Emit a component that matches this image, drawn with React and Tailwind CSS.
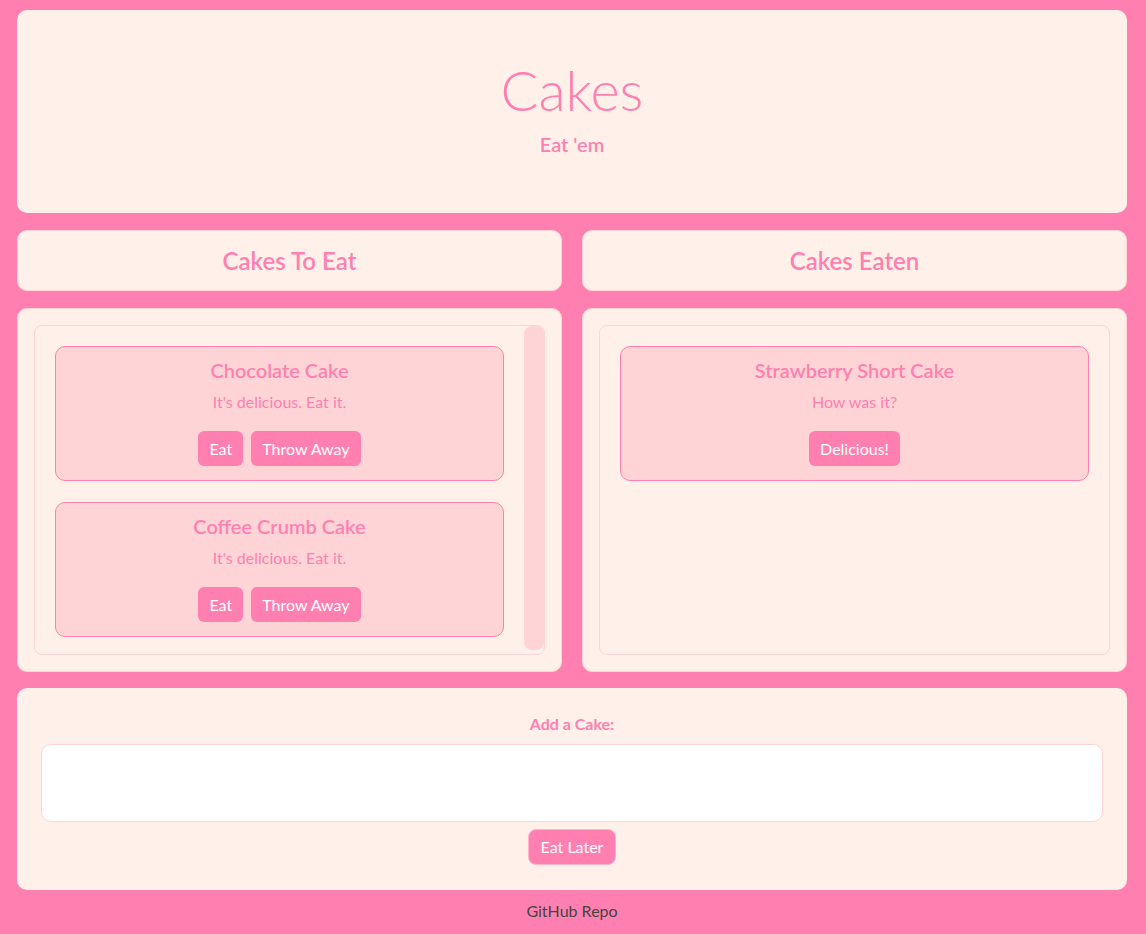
export default function App() {
  const font = { fontFamily: '"Segoe UI", Lato, "Noto Sans", sans-serif' };
  const Btn = ({ children }) => (
    <button className="h-[35px] px-[11px] rounded-[6px] bg-[#ff80b0] text-white text-[16px] leading-none">
      {children}
    </button>
  );
  const Card = ({ title, sub, buttons }) => (
    <div className="h-[135px] rounded-[10px] border border-[#ff80b0] bg-[#ffd4d6] flex flex-col items-center pt-[10px]">
      <div className="text-[20px] font-semibold text-[#ff80b0] leading-[26px]">{title}</div>
      <div className="text-[16px] text-[#ff80b0] mt-[8px] leading-[22px]">{sub}</div>
      <div className="flex gap-[8px] mt-[18px]">
        {buttons.map((b) => (
          <Btn key={b}>{b}</Btn>
        ))}
      </div>
    </div>
  );
  return (
    <div className="min-h-[934px] bg-[#ff80b0] pt-[10px]" style={font}>
      <div className="ml-[17px] w-[1110px] flex flex-col">
        <div className="h-[203px] rounded-[10px] bg-[#fff0e9] flex flex-col items-center justify-center">
          <div className="text-[56px] font-light text-[#ff80b0] leading-[64px] mt-[-8px]">Cakes</div>
          <div className="text-[20px] font-semibold text-[#ff80b0] leading-[26px] mt-[9px]">Eat 'em</div>
        </div>
        <div className="grid grid-cols-2 gap-[20px] mt-[17px]">
          <div className="h-[61px] rounded-[10px] bg-[#fff0e9] border border-[#ffd4d6] flex items-center justify-center">
            <div className="text-[24px] font-semibold text-[#ff80b0]">Cakes To Eat</div>
          </div>
          <div className="h-[61px] rounded-[10px] bg-[#fff0e9] border border-[#ffd4d6] flex items-center justify-center">
            <div className="text-[24px] font-semibold text-[#ff80b0]">Cakes Eaten</div>
          </div>
        </div>
        <div className="grid grid-cols-2 gap-[20px] mt-[17px]">
          <div className="h-[364px] rounded-[10px] bg-[#fff0e9] border border-[#ffd4d6] p-[16px]">
            <div className="h-full rounded-[8px] border border-[#ffd4d6] flex">
              <div className="flex-1 px-[20px] pt-[20px] flex flex-col gap-[21px]">
                <Card title="Chocolate Cake" sub="It's delicious. Eat it." buttons={["Eat", "Throw Away"]} />
                <Card title="Coffee Crumb Cake" sub="It's delicious. Eat it." buttons={["Eat", "Throw Away"]} />
              </div>
              <div className="w-[20px] mb-[4px] rounded-[8px] bg-[#ffd4d6]" />
            </div>
          </div>
          <div className="h-[364px] rounded-[10px] bg-[#fff0e9] border border-[#ffd4d6] p-[16px]">
            <div className="h-full rounded-[8px] border border-[#ffd4d6] px-[20px] pt-[20px]">
              <Card title="Strawberry Short Cake" sub="How was it?" buttons={["Delicious!"]} />
            </div>
          </div>
        </div>
        <div className="h-[202px] mt-[16px] rounded-[10px] bg-[#fff0e9] px-[24px] pt-[25px] flex flex-col items-center">
          <div className="text-[16px] font-bold text-[#ff80b0] leading-[22px]">Add a Cake:</div>
          <textarea className="mt-[9px] w-full h-[78px] rounded-[10px] bg-white border border-[#ffd4d6] outline-none resize-none" />
          <div className="mt-[7px]">
            <button className="h-[36px] px-[12px] rounded-[8px] border border-[#ffb4cc] bg-[#ff80b0] text-white text-[16px] leading-none">
              Eat Later
            </button>
          </div>
        </div>
        <div className="h-[42px] flex items-center justify-center text-[16px] text-[#444444]">GitHub Repo</div>
      </div>
    </div>
  );
}
